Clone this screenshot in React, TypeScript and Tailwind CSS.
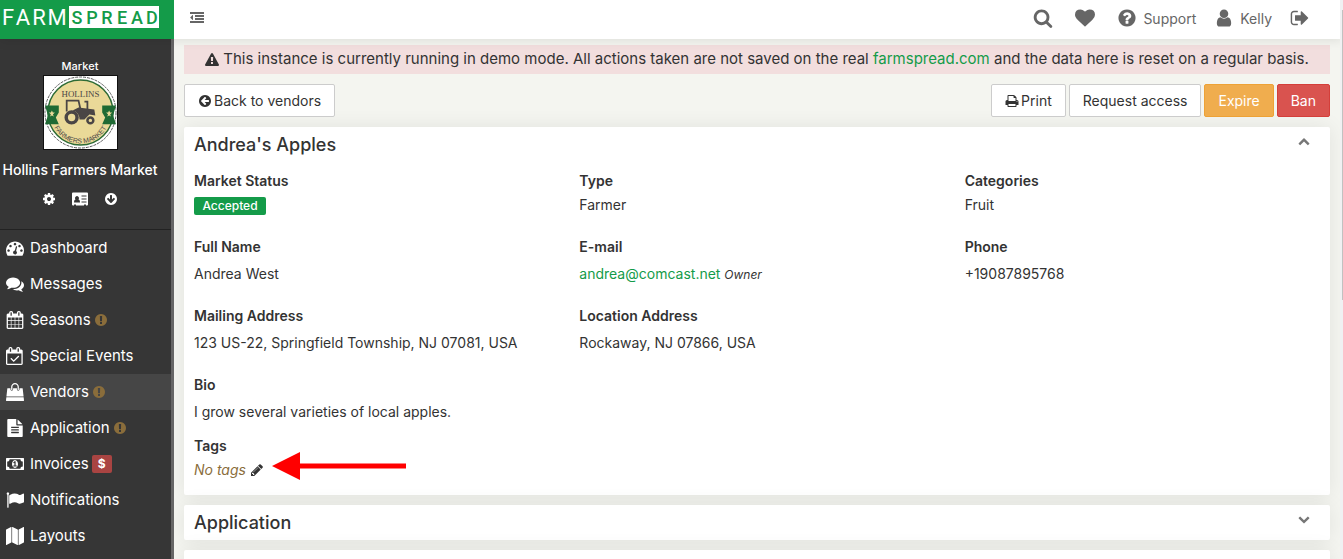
import React from "react";

interface IconProps {
  d: string;
  className?: string;
  viewBox?: string;
}

const CIRCLE =
  "q0 209-103 385.5t-279.5 279.5-385.5 103-385.5-103-279.5-279.5-103-385.5 103-385.5 279.5-279.5 385.5-103 385.5 103 279.5 279.5 103 385.5z";

const paths = {
  search:
    "M1216 832q0-185-131.5-316.5t-316.5-131.5-316.5 131.5-131.5 316.5 131.5 316.5 316.5 131.5 316.5-131.5 131.5-316.5zm512 832q0 52-38 90t-90 38q-54 0-90-38l-343-342q-179 124-399 124-143 0-273.5-55.5t-225-150-150-225-55.5-273.5 55.5-273.5 150-225 225-150 273.5-55.5 273.5 55.5 225 150 150 225 55.5 273.5q0 220-124 399l343 343q37 37 37 90z",
  heart:
    "M896 1664q-26 0-44-18l-624-602q-10-8-27.5-26t-55.5-65.5-68-97.5-53.5-121-23.5-138q0-220 127-344t351-124q62 0 126.5 21.5t120 58 95.5 68.5 76 68q36-36 76-68t95.5-68.5 120-58 126.5-21.5q224 0 351 124t127 344q0 221-229 450l-623 600q-18 18-44 18z",
  question:
    "M1024 1376v-192q0-14-9-23t-23-9h-192q-14 0-23 9t-9 23v192q0 14 9 23t23 9h192q14 0 23-9t9-23zm256-672q0-88-55.5-163t-138.5-116-170-41q-243 0-371 213-15 24 8 42l132 100q7 6 19 6 16 0 25-12 53-68 86-92 34-24 86-24 48 0 85.5 26t37.5 59q0 38-20 61t-68 45q-63 28-115.5 86.5t-52.5 125.5v36q0 14 9 23t23 9h192q14 0 23-9t9-23q0-19 21.5-49.5t54.5-49.5q32-18 49-28.5t46-35 44.5-48 28-60.5 12.5-81zm384 192" +
    CIRCLE,
  user: "M1536 1399q0 109-62.5 187t-150.5 78h-854q-88 0-150.5-78t-62.5-187q0-85 8.5-160.5t31.5-152 58.5-131 94-89 134.5-34.5q131 128 313 128t313-128q76 0 134.5 34.5t94 89 58.5 131 31.5 152 8.5 160.5zm-256-887q0 159-112.5 271.5t-271.5 112.5-271.5-112.5-112.5-271.5 112.5-271.5 271.5-112.5 271.5 112.5 112.5 271.5z",
  signOut:
    "M704 1440q0 4 1 20t.5 26.5-3 23.5-10 19.5-20.5 6.5h-320q-119 0-203.5-84.5t-84.5-203.5v-704q0-119 84.5-203.5t203.5-84.5h320q13 0 22.5 9.5t9.5 22.5q0 4 1 20t.5 26.5-3 23.5-10 19.5-20.5 6.5h-320q-66 0-113 47t-47 113v704q0 66 47 113t113 47h312l11.5 1 11.5 3 8 5.5 7 9 2 13.5zm928-544q0 26-19 45l-544 544q-19 19-45 19t-45-19-19-45v-288h-448q-26 0-45-19t-19-45v-384q0-26 19-45t45-19h448v-288q0-26 19-45t45-19 45 19l544 544q19 19 19 45z",
  outdent:
    "M384 544v576q0 13-9.5 22.5t-22.5 9.5q-14 0-23-9l-288-288q-9-9-9-23t9-23l288-288q9-9 23-9 13 0 22.5 9.5t9.5 22.5zM0 1280h1792v256h-1792zM640 896h1152v256h-1152zM640 512h1152v256h-1152zM0 128h1792v256h-1792z",
  warning:
    "M1024 1375v-190q0-14-9.5-23.5t-22.5-9.5h-192q-13 0-22.5 9.5t-9.5 23.5v190q0 14 9.5 23.5t22.5 9.5h192q13 0 22.5-9.5t9.5-23.5zm-2-374l18-459q0-12-10-19-13-11-24-11h-220q-11 0-24 11-10 7-10 21l17 457q0 10 10 16.5t24 6.5h185q14 0 23.5-6.5t10.5-16.5zm-14-934l768 1408q35 63-2 126-17 29-46.5 46t-63.5 17h-1536q-34 0-63.5-17t-46.5-46q-37-63-2-126l768-1408q17-31 47-49t65-18 65 18 47 49z",
  arrowCircleLeft:
    "M1408 960v-128q0-26-19-45t-45-19h-502l189-189q19-19 19-45t-19-45l-91-91q-18-18-45-18t-45 18l-362 362-91 91q-18 18-18 45t18 45l91 91 362 362q18 18 45 18t45-18l91-91q18-18 18-45t-18-45l-189-189h502q26 0 45-19t19-45zm256-64" +
    CIRCLE,
  print:
    "M448 1536h896v-256h-896v256zm0-640h896v-384h-160q-40 0-68-28t-28-68v-160h-640v640zm1152 64q0-26-19-45t-45-19-45 19-19 45 19 45 45 19 45-19 19-45zm128 0v416q0 13-9.5 22.5t-22.5 9.5h-224v160q0 40-28 68t-68 28h-960q-40 0-68-28t-28-68v-160h-224q-13 0-22.5-9.5t-9.5-22.5v-416q0-79 56.5-135.5t135.5-56.5h64v-544q0-40 28-68t68-28h672q40 0 88 20t76 48l152 152q28 28 48 76t20 88v256h64q79 0 135.5 56.5t56.5 135.5z",
  chevronUp:
    "M1683 1331l-166 165q-19 19-45 19t-45-19l-531-531-531 531q-19 19-45 19t-45-19l-166-165q-19-19-19-45.5t19-45.5l742-741q19-19 45-19t45 19l742 741q19 19 19 45.5t-19 45.5z",
  chevronDown:
    "M1683 808l-742 741q-19 19-45 19t-45-19l-742-741q-19-19-19-45.5t19-45.5l166-165q19-19 45-19t45 19l531 531 531-531q19-19 45-19t45 19l166 165q19 19 19 45.5t-19 45.5z",
  pencil:
    "M491 1536l91-91-235-235-91 91v107h128v128h107zm523-928q0-22-22-22-10 0-17 7l-542 542q-7 7-7 17 0 22 22 22 10 0 17-7l542-542q7-7 7-17zm-54-192l416 416-832 832h-416v-416zm683 96q0 53-37 90l-166 166-416-416 166-165q36-38 90-38 53 0 91 38l235 234q37 39 37 91z",
  cog: "M1152 896q0-106-75-181t-181-75-181 75-75 181 75 181 181 75 181-75 75-181zm512-109v222q0 12-8 23t-20 13l-185 28q-19 54-39 91 35 50 107 138 10 12 10 25t-9 23q-27 37-99 108t-94 71q-12 0-26-9l-138-108q-44 23-91 38-16 136-29 186-7 28-36 28h-222q-14 0-24.5-8.5t-11.5-21.5l-28-184q-49-16-90-37l-141 107q-10 9-25 9-14 0-25-11-126-114-165-168-7-10-7-23 0-12 8-23 15-21 51-66.5t54-70.5q-27-50-41-99l-183-27q-13-2-21-12.5t-8-23.5v-222q0-12 8-23t19-13l186-28q14-46 39-92-40-57-107-138-10-12-10-24 0-10 9-23 26-36 98.5-107.5t94.5-71.5q13 0 26 10l138 107q44-23 91-38 16-136 29-186 7-28 36-28h222q14 0 24.5 8.5t11.5 21.5l28 184q49 16 90 37l142-107q9-9 24-9 13 0 25 10 129 119 165 170 7 8 7 22 0 12-8 23-15 21-51 66.5t-54 70.5q26 50 41 98l183 28q13 2 21 12.5t8 23.5z",
  exclamation:
    "M896 128q209 0 385.5 103t279.5 279.5 103 385.5-103 385.5-279.5 279.5-385.5 103-385.5-103-279.5-279.5-103-385.5 103-385.5 279.5-279.5 385.5-103zm128 1247v-190q0-14-9-23.5t-22-9.5h-192q-13 0-23 10t-10 23v190q0 13 10 23t23 10h192q13 0 22-9.5t9-23.5zm-2-344l18-621q0-12-10-18-10-8-24-8h-220q-14 0-24 8-10 6-10 18l17 621q0 10 10 17.5t24 7.5h185q14 0 23.5-7.5t10.5-17.5z",
  dashboard:
    "M384 1152q0-53-37.5-90.5t-90.5-37.5-90.5 37.5-37.5 90.5 37.5 90.5 90.5 37.5 90.5-37.5 37.5-90.5zm192-448q0-53-37.5-90.5t-90.5-37.5-90.5 37.5-37.5 90.5 37.5 90.5 90.5 37.5 90.5-37.5 37.5-90.5zm428 481l101-382q6-26-7.5-48.5t-38.5-29.5-48 6.5-30 39.5l-101 382q-60 5-107 43.5t-63 98.5q-20 77 20 146t117 89 146-20 89-117q16-60-6-117t-72-91zm660-33q0-53-37.5-90.5t-90.5-37.5-90.5 37.5-37.5 90.5 37.5 90.5 90.5 37.5 90.5-37.5 37.5-90.5zm-640-640q0-53-37.5-90.5t-90.5-37.5-90.5 37.5-37.5 90.5 37.5 90.5 90.5 37.5 90.5-37.5 37.5-90.5zm448 192q0-53-37.5-90.5t-90.5-37.5-90.5 37.5-37.5 90.5 37.5 90.5 90.5 37.5 90.5-37.5 37.5-90.5zm320 448q0 261-141 483-19 29-54 29h-1402q-35 0-54-29-141-221-141-483 0-182 71-348t191-286 286-191 348-71 348 71 286 191 191 286 71 348z",
  comments:
    "M1408 768q0 139-94 257t-256.5 186.5-353.5 68.5q-86 0-176-16-124 88-278 128-36 9-86 16h-3q-11 0-20.5-8t-11.5-21q-1-3-1-6.5t.5-6.5 2-6l2.5-5 3.5-5.5 4-5 4.5-5 4-4.5q5-6 23-25t26-29.5 22.5-29 25-38.5 20.5-44q-124-72-195-177t-71-224q0-139 94-257t256.5-186.5 353.5-68.5 353.5 68.5 256.5 186.5 94 257zm384 256q0 120-71 224.5t-195 176.5q10 24 20.5 44t25 38.5 22.5 29 26 29.5 23 25q1 1 4 4.5t4.5 5 4 5 3.5 5.5l2.5 5 2 6 .5 6.5-1 6.5q-3 14-13 22t-22 7q-50-7-86-16-154-40-278-128-90 16-176 16-271 0-472-132 58 4 88 4 161 0 309-45t264-129q125-92 192-212t67-254q0-77-23-152 129 71 204 178t75 230z",
  calendar:
    "M192 1664h288v-288h-288v288zm352 0h320v-288h-320v288zm-352-352h288v-320h-288v320zm352 0h320v-320h-320v320zm-352-384h288v-288h-288v288zm736 736h320v-288h-320v288zm-384-736h320v-288h-320v288zm768 736h288v-288h-288v288zm-384-352h320v-320h-320v320zm-352-864v-288q0-13-9.5-22.5t-22.5-9.5h-64q-13 0-22.5 9.5t-9.5 22.5v288q0 13 9.5 22.5t22.5 9.5h64q13 0 22.5-9.5t9.5-22.5zm736 864h288v-320h-288v320zm-384-384h320v-288h-320v288zm384 0h288v-288h-288v288zm32-480v-288q0-13-9.5-22.5t-22.5-9.5h-64q-13 0-22.5 9.5t-9.5 22.5v288q0 13 9.5 22.5t22.5 9.5h64q13 0 22.5-9.5t9.5-22.5zm384-64v1280q0 52-38 90t-90 38h-1408q-52 0-90-38t-38-90v-1280q0-52 38-90t90-38h128v-96q0-66 47-113t113-47h64q66 0 113 47t47 113v96h384v-96q0-66 47-113t113-47h64q66 0 113 47t47 113v96h128q52 0 90 38t38 90z",
  calendarCheck:
    "M1303 964l-512 512q-10 9-23 9t-23-9l-288-288q-9-10-9-23t9-22l46-46q9-9 22-9t23 9l220 220 444-444q10-9 23-9t22 9l46 46q9 9 9 22t-9 23zm-1175 700h1408v-1024h-1408v1024zm384-1216v-288q0-14-9-23t-23-9h-64q-14 0-23 9t-9 23v288q0 14 9 23t23 9h64q14 0 23-9t9-23zm768 0v-288q0-14-9-23t-23-9h-64q-14 0-23 9t-9 23v288q0 14 9 23t23 9h64q14 0 23-9t9-23zm384-64v1280q0 52-38 90t-90 38h-1408q-52 0-90-38t-38-90v-1280q0-52 38-90t90-38h128v-96q0-66 47-113t113-47h64q66 0 113 47t47 113v96h384v-96q0-66 47-113t113-47h64q66 0 113 47t47 113v96h128q52 0 90 38t38 90z",
  bag: "M1757 1408l35 313q3 28-16 50-19 21-48 21h-1664q-29 0-48-21-19-22-16-50l35-313h1722zm-93-839l86 775h-1708l86-775q3-24 21-40.5t43-16.5h256v128q0 53 37.5 90.5t90.5 37.5 90.5-37.5 37.5-90.5v-128h384v128q0 53 37.5 90.5t90.5 37.5 90.5-37.5 37.5-90.5v-128h256q25 0 43 16.5t21 40.5zm-384-185v256q0 26-19 45t-45 19-45-19-19-45v-256q0-106-75-181t-181-75-181 75-75 181v256q0 26-19 45t-45 19-45-19-19-45v-256q0-159 112.5-271.5t271.5-112.5 271.5 112.5 112.5 271.5z",
  file: "M1596 476q14 14 28 36h-472v-472q22 14 36 28zm-476 164h544v1056q0 40-28 68t-68 28h-1344q-40 0-68-28t-28-68v-1600q0-40 28-68t68-28h800v544q0 40 28 68t68 28zm160 736v-64q0-14-9-23t-23-9h-704q-14 0-23 9t-9 23v64q0 14 9 23t23 9h704q14 0 23-9t9-23zm0-256v-64q0-14-9-23t-23-9h-704q-14 0-23 9t-9 23v64q0 14 9 23t23 9h704q14 0 23-9t9-23zm0-256v-64q0-14-9-23t-23-9h-704q-14 0-23 9t-9 23v64q0 14 9 23t23 9h704q14 0 23-9t9-23z",
  money:
    "M768 1152h384v-96h-128v-448h-114l-148 137 77 80q42-37 55-57h2v288h-128v96zm512-256q0 70-21 142t-59.5 134-101.5 101-138 39-138-39-101.5-101-59.5-134-21-142 21-142 59.5-134 101.5-101 138-39 138 39 101.5 101 59.5 134 21 142zm512 256v-512q-106 0-181-75t-75-181h-1152q0 106-75 181t-181 75v512q106 0 181 75t75 181h1152q0-106 75-181t181-75zm128-832v1152q0 26-19 45t-45 19h-1792q-26 0-45-19t-19-45v-1152q0-26 19-45t45-19h1792q26 0 45 19t19 45z",
  flag: "M320 256q0 72-64 110v1266q0 13-9.5 22.5t-22.5 9.5h-64q-13 0-22.5-9.5t-9.5-22.5v-1266q-64-38-64-110 0-53 37.5-90.5t90.5-37.5 90.5 37.5 37.5 90.5zm1472 64v763q0 25-12.5 38.5t-39.5 27.5q-215 116-369 116-61 0-123.5-22t-108.5-48-115.5-48-142.5-22q-192 0-464 146-17 9-33 9-26 0-45-19t-19-45v-742q0-32 31-55 21-14 79-43 236-120 421-120 107 0 200 29t219 88q38 19 88 19 54 0 117.5-21t110-47 88-47 54.5-21q26 0 45 19t19 45z",
  map: "M512 0q13 0 22.5 9.5t9.5 22.5v1472q0 20-17 28l-480 256q-7 4-15 4-13 0-22.5-9.5t-9.5-22.5v-1472q0-20 17-28l480-256q7-4 15-4zm1248 0q13 0 22.5 9.5t9.5 22.5v1472q0 20-17 28l-480 256q-7 4-15 4-13 0-22.5-9.5t-9.5-22.5v-1472q0-20 17-28l480-256q7-4 15-4zm-1120 0q8 0 14 3l512 256q18 10 18 29v1472q0 13-9.5 22.5t-22.5 9.5q-8 0-14-3l-512-256q-18-10-18-29v-1472q0-13 9.5-22.5t22.5-9.5z",
  card: "M1 1h14a1 1 0 0 1 1 1v11a1 1 0 0 1-1 1h-1v-1h-2v1h-8v-1h-2v1h-1a1 1 0 0 1-1-1v-11a1 1 0 0 1 1-1zM2 11h6c0-2-.7-3-1.500-3a2 2 0 1 0-3 0c-.8 0-1.500 1-1.500 3zM9.500 4v1h5v-1zM9.500 7v1h5v-1zM9.500 10v1h5v-1z",
};

function Icon({ d, className = "size-4", viewBox = "0 0 1792 1792" }: IconProps) {
  return (
    <svg
      viewBox={viewBox}
      fill="currentColor"
      fillRule="evenodd"
      aria-hidden="true"
      className={"shrink-0 " + className}
    >
      <path d={d} />
    </svg>
  );
}

function MarketLogo() {
  return (
    <svg viewBox="0 0 74 74" className="size-[75px] border border-[#111]" role="img" aria-label="Hollins Farmers Market">
      <rect width="74" height="74" fill="#fff" />
      <circle cx="37" cy="37" r="36" fill="#fff" stroke="#555" strokeDasharray="3 1" />
      <circle cx="37" cy="37" r="33" fill="#ead998" stroke="#2e6b35" strokeWidth="1.500" />
      <path d="M1 30h14v7l-3 5 3 7H1l3-9zM73 30H59v7l3 5-3 7h14l-3-9z" fill="#1f6a34" />
      <path d="M8 35l1 2h2l-2 2 1 2-2-1-2 1 1-2-2-2h2zM66 35l1 2h2l-2 2 1 2-2-1-2 1 1-2-2-2h2z" fill="#ead998" />
      <text x="37" y="21" textAnchor="middle" fontSize="9" fontFamily="Liberation Serif, serif" fill="#4a4545">
        HOLLINS
      </text>
      <path id="market-arc" d="M8 46A30 30 0 0 0 66 46" fill="none" />
      <text fontSize="7" fontFamily="Liberation Sans, sans-serif" fill="#4a4545">
        <textPath href="#market-arc" startOffset="50%" textAnchor="middle">
          FARMERS MARKET
        </textPath>
      </text>
      <g fill="none" stroke="#4a4545" strokeWidth="1.800">
        <path d="M23 36V25h12l2 9M44 34v-8h-3" />
        <circle cx="28" cy="42" r="5.500" strokeWidth="3.500" />
        <circle cx="47" cy="45" r="3" strokeWidth="2.500" />
      </g>
      <path d="M35 32l16 2 1 6-6-1-5 5h-5c0-5-3-8-7-9z" fill="#4a4545" />
    </svg>
  );
}

const navItems = [
  { label: "Dashboard", icon: paths.dashboard },
  { label: "Messages", icon: paths.comments },
  { label: "Seasons", icon: paths.calendar, alert: true },
  { label: "Special Events", icon: paths.calendarCheck },
  { label: "Vendors", icon: paths.bag, alert: true, active: true },
  { label: "Application", icon: paths.file, alert: true },
  { label: "Invoices", icon: paths.money, viewBox: "0 0 1920 1792", due: true },
  { label: "Notifications", icon: paths.flag },
  { label: "Layouts", icon: paths.map },
];

function Sidebar() {
  return (
    <aside className="w-[174px] shrink-0 border-r-[3px] border-[#666] bg-[#363636] text-white">
      <div className="flex flex-col items-center border-b border-[#222] pt-[18px] pr-[11px] pb-[22px]">
        <span className="text-[11px] leading-[18px] font-medium">Market</span>
        <MarketLogo />
        <span className="mt-2 text-sm leading-6 font-medium whitespace-nowrap">Hollins Farmers Market</span>
        <div className="mt-[9px] flex h-4 items-center gap-4">
          <button aria-label="Settings">
            <Icon d={paths.cog} className="size-[14px]" />
          </button>
          <button aria-label="Contacts">
            <Icon d={paths.card} viewBox="0 0 16 15" />
          </button>
          <button aria-label="Download">
            <Icon d={paths.arrowCircleLeft} className="size-[14px] -rotate-90" />
          </button>
        </div>
      </div>
      <nav>
        {navItems.map((item) => (
          <a
            key={item.label}
            href="#"
            className={"flex h-9 items-center pl-[6px] text-[15px] " + (item.active ? "bg-[#464646]" : "")}
          >
            <Icon d={item.icon} viewBox={item.viewBox} className="mr-[6px] size-[18px]" />
            {item.label}
            {item.alert && <Icon d={paths.exclamation} className="ml-[3px] size-[14px] text-[#8a6d3b]" />}
            {item.due && (
              <span className="ml-[3px] rounded-xs bg-[#a94442] px-[6px] text-xs leading-[18px] font-bold">$</span>
            )}
          </a>
        ))}
      </nav>
    </aside>
  );
}

function Field({ label, tight, children }: { label: string; tight?: boolean; children: React.ReactNode }) {
  return (
    <div>
      <dt className="text-sm leading-5 font-semibold">{label}</dt>
      <dd className={"text-sm leading-5 " + (tight ? "mt-1" : "mt-[7px]")}>{children}</dd>
    </div>
  );
}

const buttonBase = "flex h-[33px] items-center gap-[2px] rounded-xs border px-[13px] text-sm";

export default function App() {
  return (
    <div className="relative flex h-screen flex-col overflow-hidden bg-[#f4f5f0] font-[Inter,sans-serif] text-[#333]">
      <header className="z-10 flex h-[39px] shrink-0 bg-white shadow-[0_0_12px_rgba(0,0,0,0.12)]">
        <a href="#" aria-label="FarmSpread" className="w-[174px] shrink-0 bg-[#149b49]">
          <svg viewBox="0 0 174 39" className="h-[39px] w-[174px]">
            <rect x="69" y="6" width="90" height="22" fill="#fff" />
            <g fontFamily="Roboto, sans-serif" fontSize="22" textAnchor="middle">
              {["F", "A", "R", "M"].map((letter, i) => (
                <text key={letter} x={[8, 23, 39, 57][i]} y="25" fill="#fff">
                  {letter}
                </text>
              ))}
            </g>
            <g fontFamily="Roboto, sans-serif" fontSize="18" fontWeight="500" textAnchor="middle">
              {["S", "P", "R", "E", "A", "D"].map((letter, i) => (
                <text key={letter} x={77 + i * 15} y="24" fill="#149b49">
                  {letter}
                </text>
              ))}
            </g>
          </svg>
        </a>
        <div className="flex flex-1 items-center justify-between pr-[33px] pb-1 pl-4 text-[#666]">
          <button aria-label="Toggle sidebar">
            <Icon d={paths.outdent} className="size-[14px]" />
          </button>
          <div className="flex items-center gap-[22px] text-sm">
            <button aria-label="Search">
              <Icon d={paths.search} className="size-5" />
            </button>
            <a href="#" aria-label="Favorites">
              <Icon d={paths.heart} className="size-5" />
            </a>
            <div className="flex items-center gap-[18px]">
              <a href="#" className="flex items-center gap-[6px]">
                <Icon d={paths.question} className="size-5" />
                <span className="pt-[2px]">Support</span>
              </a>
              <a href="#" className="flex items-center gap-[6px]">
                <Icon d={paths.user} className="size-5" />
                <span className="pt-[2px]">Kelly</span>
              </a>
              <a href="#" aria-label="Sign out">
                <Icon d={paths.signOut} className="size-5" />
              </a>
            </div>
          </div>
        </div>
      </header>
      <div className="flex min-h-0 flex-1">
        <Sidebar />
        <main className="min-w-0 flex-1 overflow-hidden pt-[6px] pr-[13px] pl-[10px]">
          <p className="flex h-[29px] items-center justify-center gap-1 bg-[#f2dede] text-[15px] whitespace-nowrap">
            <Icon d={paths.warning} className="size-[14px]" />
            <span>
              This instance is currently running in demo mode. All actions taken are not saved on the real{" "}
              <a href="#" className="text-[#149b49]">
                farmspread.com
              </a>{" "}
              and the data here is reset on a regular basis.
            </span>
          </p>
          <div className="mt-[10px] flex justify-between">
            <button className={buttonBase + " border-[#ccc] bg-white"}>
              <Icon d={paths.arrowCircleLeft} className="size-[14px]" />
              Back to vendors
            </button>
            <div className="flex gap-[3px]">
              <button className={buttonBase + " border-[#ccc] bg-white"}>
                <Icon d={paths.print} className="size-[14px]" />
                Print
              </button>
              <button className={buttonBase + " border-[#ccc] bg-white"}>Request access</button>
              <button className={buttonBase + " border-[#eea236] bg-[#f0ad4e] text-white"}>Expire</button>
              <button className={buttonBase + " border-[#d43f3a] bg-[#d9534f] text-white"}>Ban</button>
            </div>
          </div>
          <section className="mt-[10px] rounded-xs bg-white shadow-[0_0_20px_rgba(0,0,0,0.08)]">
            <div className="flex h-[35px] items-center justify-between pr-5 pl-[10px]">
              <h2 className="text-lg font-medium">Andrea's Apples</h2>
              <button aria-label="Collapse" className="pb-2 text-[#777]">
                <Icon d={paths.chevronUp} className="size-3" />
              </button>
            </div>
            <dl className="grid grid-cols-3 gap-x-[30px] px-[10px] pt-[9px] pb-[15px]">
              <div className="mb-[22px]">
                <Field label="Market Status" tight>
                  <span className="mt-[6px] flex h-[18px] w-[72px] items-center justify-center rounded-xs bg-[#149b49] text-xs font-medium text-white">
                    Accepted
                  </span>
                </Field>
              </div>
              <Field label="Type" tight>Farmer</Field>
              <Field label="Categories" tight>Fruit</Field>
              <div className="mb-[22px]">
                <Field label="Full Name">Andrea West</Field>
              </div>
              <Field label="E-mail">
                <a href="#" className="text-[#149b49]">
                  andrea@comcast.net
                </a>{" "}
                <em className="text-xs">Owner</em>
              </Field>
              <Field label="Phone">+19087895768</Field>
              <div className="mb-[22px]">
                <Field label="Mailing Address">123 US-22, Springfield Township, NJ 07081, USA</Field>
              </div>
              <div className="col-span-2">
                <Field label="Location Address">Rockaway, NJ 07866, USA</Field>
              </div>
              <div className="col-span-3 mb-[14px]">
                <Field label="Bio">I grow several varieties of local apples.</Field>
              </div>
              <div className="col-span-3">
                <Field label="Tags" tight>
                  <span className="flex items-center">
                    <em className="text-[#8a6d3b]">No tags</em>
                    <button aria-label="Edit tags" className="ml-1">
                      <Icon d={paths.pencil} className="size-[14px]" />
                    </button>
                    <svg viewBox="0 0 134 28" className="-mt-4 -mb-2 ml-2 h-7 w-[134px]" aria-hidden="true">
                      <path d="M0 14L28 0v11.500h106v5H28V28z" fill="#f00" />
                    </svg>
                  </span>
                </Field>
              </div>
            </dl>
          </section>
          <section className="mt-[10px] flex h-[35px] items-center justify-between rounded-xs bg-white pr-5 pl-[10px] shadow-[0_0_20px_rgba(0,0,0,0.08)]">
            <h2 className="text-lg font-medium">Application</h2>
            <button aria-label="Expand" className="pb-2 text-[#777]">
              <Icon d={paths.chevronDown} className="size-3" />
            </button>
          </section>
          <section className="mt-[10px] h-[35px] rounded-xs bg-white shadow-[0_0_20px_rgba(0,0,0,0.08)]" />
        </main>
      </div>
      {/* page scrollbar */}
      <div className="absolute inset-y-0 right-0 z-20 w-[3px] bg-[#f0f0f2] pt-[10px] pl-[2px]">
        <div className="h-[290px] bg-[#c1c1c1]" />
      </div>
    </div>
  );
}
